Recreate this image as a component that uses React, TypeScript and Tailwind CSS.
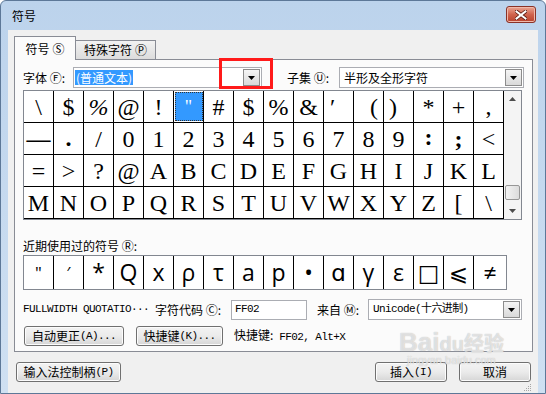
import React from 'react';

const grid: string[][] = [
  ['\\', '$', '%', '@', '!', '"', '#', '$', '%', '&', '′', '(', ')', '*', '+', ','],
  ['—', '.', '/', '0', '1', '2', '3', '4', '5', '6', '7', '8', '9', ':', ';', '<'],
  ['=', '>', '?', '@', 'A', 'B', 'C', 'D', 'E', 'F', 'G', 'H', 'I', 'J', 'K', 'L'],
  ['M', 'N', 'O', 'P', 'Q', 'R', 'S', 'T', 'U', 'V', 'W', 'X', 'Y', 'Z', '[', '\\'],
];

// per-cell tweaks so the odd glyphs sit like the original
const tweak: Record<string, string> = {
  '0-1': 'text-[17px]',
  '0-2': 'text-[19px] italic',
  '0-3': 'text-[16px]',
  '0-10': 'justify-start pl-[6px] items-start pt-[4px]',
  '0-11': 'justify-end pr-[5px]',
  '0-12': 'justify-start pl-[5px]',
  '0-15': 'items-end pb-[4px]',
  '1-0': 'font-bold text-[19px]',
  '1-1': 'items-end pb-[4px] font-bold',
  '1-13': 'items-end pb-[5px] text-[17px] font-bold',
  '1-14': 'items-end pb-[3px] text-[17px] font-bold',
};

const recent = ['"', '′', '*', 'Q', 'x', 'ρ', 'τ', 'a', 'p', '•', 'ɑ', 'γ', 'ε', '□', '⩽', '≠'];

function DropBtn({ size = 17 }: { size?: number }) {
  return (
    <div
      className="flex items-center justify-center border border-[#8c8c8c] bg-gradient-to-b from-[#f5f5f5] to-[#d9d9d9]"
      style={{ width: size, height: size }}
    >
      <svg width="7" height="4" viewBox="0 0 7 4">
        <path d="M0 0h7L3.5 4z" fill="#000" />
      </svg>
    </div>
  );
}

function Btn({ children, className = '' }: { children: React.ReactNode; className?: string }) {
  return (
    <div
      className={`flex h-[20px] items-center justify-center rounded-[3px] border border-[#707070] bg-gradient-to-b from-[#f3f3f3] via-[#ebebeb] to-[#d6d6d6] text-[12px] leading-none text-black shadow-[inset_0_0_0_1px_#fcfcfc] ${className}`}
    >
      {children}
    </div>
  );
}

export default function App() {
  return (
    <div className="relative flex h-[394px] w-[546px] flex-col overflow-hidden rounded-t-[6px] border border-[#5d7898] bg-gradient-to-b from-[#bcd3ec] to-[#cfe0f2] font-['Noto_Sans_CJK_SC','Noto_Sans',sans-serif] text-[12px] text-black">
      {/* title bar */}
      <div className="flex h-[29px] shrink-0 items-center justify-between pl-[11px] pr-[9px]">
        <span className="text-[12px] leading-none">符号</span>
        <div className="mt-[-2px] flex h-[17px] w-[30px] items-center justify-center rounded-[3px] border border-[#8a3227] bg-gradient-to-b from-[#e9a593] via-[#d0634d] to-[#b8412b] shadow-[inset_0_0_0_1px_#f0b9aa]">
          <svg width="12" height="10" viewBox="0 0 12 10">
            <path d="M1.5 1.5 10.5 8.5M10.5 1.5 1.5 8.5" stroke="#5b1a12" strokeWidth="3.6" strokeLinecap="square" />
            <path d="M1.5 1.5 10.5 8.5M10.5 1.5 1.5 8.5" stroke="#fff" strokeWidth="2" strokeLinecap="square" />
          </svg>
        </div>
      </div>

      {/* client area */}
      <div className="mx-[7px] mb-[6px] flex flex-1 flex-col bg-[#f0f0f0] px-[6px] pt-[6px]">
        {/* tabs */}
        <div className="relative z-10 flex h-[23px] items-end">
          <div className="mb-[-1px] flex h-[24px] w-[62px] items-center justify-center border border-b-0 border-[#898c95] bg-[#fbfbfb] leading-none">
            符号 <span className="ml-[3px]">Ⓢ</span>
          </div>
          <div className="flex h-[19px] w-[80px] items-center justify-center border border-b-0 border-l-0 border-[#898c95] bg-gradient-to-b from-[#f2f2f2] to-[#dcdcdc] leading-none">
            特殊字符 <span className="ml-[3px]">Ⓟ</span>
          </div>
        </div>

        {/* tab page */}
        <div className="flex h-[293px] w-[519px] flex-col border border-[#898c95] bg-[#fbfbfb] px-[8px]">
          {/* font / subset */}
          <div className="mt-[7px] flex h-[21px] items-center">
            <span className="w-[50px] leading-none">字体 Ⓕ:</span>
            <div className="flex h-[21px] w-[189px] items-center border border-[#abadb3] bg-white pl-[1px] pr-[1px]">
              <span className="bg-[#3399ff] px-[1px] leading-[15px] text-white">(普通文本)</span>
              <div className="flex-1" />
              <DropBtn />
            </div>
            <span className="ml-[25px] w-[52px] leading-none">子集 Ⓤ:</span>
            <div className="flex h-[21px] w-[185px] items-center border border-[#abadb3] bg-white pl-[4px] pr-[1px]">
              <span className="leading-none">半形及全形字符</span>
              <div className="flex-1" />
              <DropBtn />
            </div>
          </div>

          {/* symbol grid */}
          <div className="mt-[2px] flex w-[499px] border border-[#828790] bg-white">
            <div className="flex flex-col">
              {grid.map((row, r) => (
                <div key={r} className="flex h-[32px] border-b border-black">
                  {row.map((ch, c) => {
                    const sel = r === 0 && c === 5;
                    return (
                      <div
                        key={c}
                        className={`flex h-[31px] w-[30px] items-center justify-center border-r border-black font-['Liberation_Serif','DejaVu_Serif',serif] text-[24px] leading-none ${
                          sel ? 'text-white' : ''
                        } ${tweak[`${r}-${c}`] ?? ''}`}
                      >
                        {sel ? (
                          <div className="flex h-[29px] w-[28px] items-center justify-center border border-dotted border-[#333] bg-[#3399ff] text-[18px]">
                            "
                          </div>
                        ) : (
                          ch
                        )}
                      </div>
                    );
                  })}
                </div>
              ))}
            </div>
            <div className="flex w-[17px] flex-col items-center bg-[#f4f4f4] pt-[6px]">
              <svg width="7" height="4" viewBox="0 0 7 4">
                <path d="M0 4h7L3.5 0z" fill="#4c4c4c" />
              </svg>
              <div className="flex-1" />
              <div className="h-[15px] w-[15px] rounded-[2px] border border-[#979797] bg-gradient-to-r from-[#f3f3f3] to-[#dcdcdc]" />
              <svg width="7" height="4" viewBox="0 0 7 4" className="mb-[6px] mt-[9px]">
                <path d="M0 0h7L3.5 4z" fill="#4c4c4c" />
              </svg>
            </div>
          </div>

          {/* recently used */}
          <div className="mt-[18px] h-[16px] leading-[16px]">近期使用过的符号 Ⓡ:</div>
          <div className="mt-[1px] flex h-[35px] w-[484px] border border-[#828790] bg-white">
            {recent.map((ch, i) => (
              <div
                key={i}
                className={`flex h-[33px] items-center justify-center font-['Open_Sans','DejaVu_Sans',sans-serif] leading-none ${
                  i < 15 ? 'w-[30px] border-r border-black' : 'flex-1'
                } ${i < 2 ? 'text-[17px]' : 'text-[23px]'}`}
              >
                {ch}
              </div>
            ))}
          </div>

          {/* name / code / from */}
          <div className="mt-[9px] flex h-[21px] items-center">
            <span className="w-[132px] font-['Liberation_Mono',monospace] text-[11px] leading-none tracking-[-0.6px]">
              FULLWIDTH QUOTATIO···
            </span>
            <span className="w-[76px] leading-none">字符代码 Ⓒ:</span>
            <div className="flex h-[20px] w-[76px] items-center border border-[#abadb3] bg-white pl-[3px] font-['Liberation_Mono',monospace] text-[11px] tracking-[-0.6px]">
              FF02
            </div>
            <span className="ml-[10px] w-[51px] leading-none">来自 Ⓜ:</span>
            <div className="flex h-[21px] w-[154px] items-center border border-[#abadb3] bg-white pl-[4px] pr-[1px]">
              <span className="font-['Liberation_Mono','Noto_Sans_CJK_SC',monospace] text-[11px] leading-none tracking-[-0.6px]">
                Unicode(十六进制)
              </span>
              <div className="flex-1" />
              <DropBtn />
            </div>
          </div>

          {/* autocorrect / shortcut */}
          <div className="mt-[6px] flex h-[20px] items-center">
            <Btn className="ml-[1px] w-[100px]">
              自动更正<span className="font-['Liberation_Mono',monospace] text-[11px] tracking-[-0.6px]">(A)...</span>
            </Btn>
            <Btn className="ml-[12px] w-[87px]">
              快捷键<span className="font-['Liberation_Mono',monospace] text-[11px] tracking-[-0.6px]">(K)...</span>
            </Btn>
            <span className="ml-[11px] leading-none">
              快捷键:<span className="font-['Liberation_Mono',monospace] text-[11px] tracking-[-0.6px]"> FF02, Alt+X</span>
            </span>
          </div>
        </div>

        {/* dialog buttons */}
        <div className="mt-[10px] flex items-center">
          <Btn className="ml-[2px] w-[105px]">
            输入法控制柄<span className="font-['Liberation_Mono',monospace] text-[11px] tracking-[-0.6px]">(P)</span>
          </Btn>
          <div className="flex-1" />
          <Btn className="w-[72px] border-[#3c7fb1] shadow-[inset_0_0_0_1px_#9fd7f6]">
            插入<span className="font-['Liberation_Mono',monospace] text-[11px] tracking-[-0.6px]">(I)</span>
          </Btn>
          <Btn className="ml-[12px] mr-[1px] w-[72px]">取消</Btn>
        </div>

        <div className="flex flex-1 items-end justify-end">
          <svg width="10" height="10" viewBox="0 0 10 10" className="mb-[1px]">
            <g fill="#a7a7a7">
              <rect x="8" y="2" width="1" height="1" />
              <rect x="6" y="4" width="1" height="1" />
              <rect x="8" y="4" width="1" height="1" />
              <rect x="4" y="6" width="1" height="1" />
              <rect x="6" y="6" width="1" height="1" />
              <rect x="8" y="6" width="1" height="1" />
              <rect x="2" y="8" width="1" height="1" />
              <rect x="4" y="8" width="1" height="1" />
              <rect x="6" y="8" width="1" height="1" />
              <rect x="8" y="8" width="1" height="1" />
            </g>
          </svg>
        </div>
      </div>

      {/* red highlight drawn over the font box */}
      <div className="pointer-events-none absolute left-[218px] top-[57px] h-[31px] w-[54px] border-[3px] border-[#ff1a1a]" />

      {/* watermark */}
      <div className="pointer-events-none absolute left-[398px] top-[328px] flex flex-col items-center text-white/60 [text-shadow:0_0_1px_#b0b0b0]">
        <span className="font-['Liberation_Sans',sans-serif] text-[26px] font-bold leading-none">
          Bai<span className="text-[20px]">du</span>
          <span className="font-['Noto_Sans_CJK_SC',sans-serif] text-[20px]">经验</span>
        </span>
        <span className="font-['Liberation_Sans',sans-serif] text-[11px] leading-none">jingyan.baidu.com</span>
      </div>
    </div>
  );
}
